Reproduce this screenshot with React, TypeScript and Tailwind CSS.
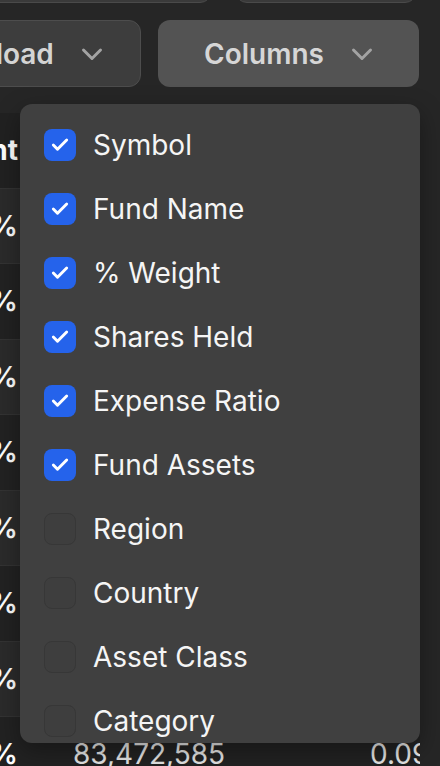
import { Check } from "lucide-react";

type ColumnOption = {
  key: string;
  label: string;
  visible: boolean;
};

const columnOptions: ColumnOption[] = [
  { key: "symbol", label: "Symbol", visible: true },
  { key: "fundName", label: "Fund Name", visible: true },
  { key: "weight", label: "% Weight", visible: true },
  { key: "shares", label: "Shares Held", visible: true },
  { key: "expense", label: "Expense Ratio", visible: true },
  { key: "assets", label: "Fund Assets", visible: true },
  { key: "region", label: "Region", visible: false },
  { key: "country", label: "Country", visible: false },
  { key: "assetClass", label: "Asset Class", visible: false },
  { key: "category", label: "Category", visible: false },
  { key: "sector", label: "Sector", visible: false },
];

const rows = [
  { weight: "7.12%", shares: "412,903,118", expense: "0.03%" },
  { weight: "6.48%", shares: "298,114,260", expense: "0.04%" },
  { weight: "5.91%", shares: "251,007,432", expense: "0.03%" },
  { weight: "4.37%", shares: "187,552,901", expense: "0.05%" },
  { weight: "3.02%", shares: "144,890,377", expense: "0.06%" },
  { weight: "2.64%", shares: "121,305,846", expense: "0.07%" },
  { weight: "2.11%", shares: "98,764,120", expense: "0.08%" },
  { weight: "1.86%", shares: "83,472,585", expense: "0.09%" },
];

export default function App() {
  return (
    <div
      className="relative h-[766px] w-[440px] overflow-hidden bg-[#262626] text-white"
      style={{ fontFamily: "Inter, 'Noto Sans', sans-serif" }}
    >
      {/* search / filter fields, scrolled mostly out of view */}
      <div className="-mt-[57px] ml-[-40px] flex h-[60px] gap-[23px]">
        <div className="w-[252px] rounded-xl border-[1.5px] border-[#4a4a4a] bg-[#3a3a3a]" />
        <div className="w-[182px] rounded-xl border-[1.5px] border-[#4a4a4a] bg-[#3a3a3a]" />
      </div>

      <div className="relative mt-[17px] ml-[-120px] flex h-[67px] gap-[17px]">
        <button
          className="flex w-[261px] items-center justify-center gap-[27px] rounded-xl border-[1.5px] border-[#4d4d4d] bg-[#3d3d3d] text-[28px] font-semibold text-[#d4d4d4]"
          type="button"
        >
          Download
          <ChevronDownIcon />
        </button>
        <div className="relative w-[261px]">
          <button
            className="flex h-full w-full items-center justify-center gap-[27px] rounded-xl bg-[#535353] text-[28px] font-semibold text-[#d6d6d6]"
            type="button"
          >
            Columns
            <ChevronDownIcon />
          </button>

          <div className="absolute right-[-1px] top-[84px] z-10 h-[639px] w-[400px] overflow-hidden rounded-xl bg-[#404040] pt-[9px] shadow-[0_8px_24px_rgba(0,0,0,0.35)]">
            {columnOptions.map((option) => (
              <label
                className="flex h-16 items-center gap-[17px] px-6 text-[28px] text-[#f5f5f5]"
                key={option.key}
              >
                <span
                  className={`flex h-8 w-8 shrink-0 items-center justify-center rounded-lg ${
                    option.visible
                      ? "bg-[#2563eb]"
                      : "border border-[#373737] bg-[#3e3e3e]"
                  }`}
                >
                  {option.visible && (
                    <Check className="h-5 w-5 text-white" strokeWidth={3.5} />
                  )}
                </span>
                {option.label}
              </label>
            ))}
          </div>
        </div>
      </div>

      <div className="mt-[26px] ml-[-200px] w-[620px] overflow-hidden">
        <div className="flex h-[75.5px] items-center border-b border-[#333333] bg-[#212121] text-[28px] font-bold">
          <span className="w-[218px] shrink-0 text-right">Weight</span>
          <span className="ml-[55px] w-[297px] shrink-0">Shares</span>
          <span className="shrink-0 whitespace-nowrap">Expense</span>
        </div>
        {rows.map((row, index) => (
          <div
            className={`flex h-[75.5px] items-center border-b border-[#333333] text-[28px] ${
              index % 2 === 0 ? "bg-[#2b2b2b]" : "bg-[#222222]"
            }`}
            key={row.shares}
          >
            <span className="w-[218px] shrink-0 text-right font-semibold">
              {row.weight}
            </span>
            <span className="ml-[55px] w-[297px] shrink-0 text-[#e5e5e5]">
              {row.shares}
            </span>
            <span className="shrink-0 whitespace-nowrap text-[#e5e5e5]">
              {row.expense}
            </span>
          </div>
        ))}
      </div>
    </div>
  );
}

function ChevronDownIcon() {
  return (
    <svg
      aria-hidden="true"
      className="shrink-0 text-[#a3a3a3]"
      fill="none"
      height="14"
      stroke="currentColor"
      strokeLinecap="round"
      strokeLinejoin="round"
      strokeWidth="3"
      viewBox="0 0 22 14"
      width="22"
    >
      <path d="M2.5 3l8.5 8.5L19.5 3" />
    </svg>
  );
}
